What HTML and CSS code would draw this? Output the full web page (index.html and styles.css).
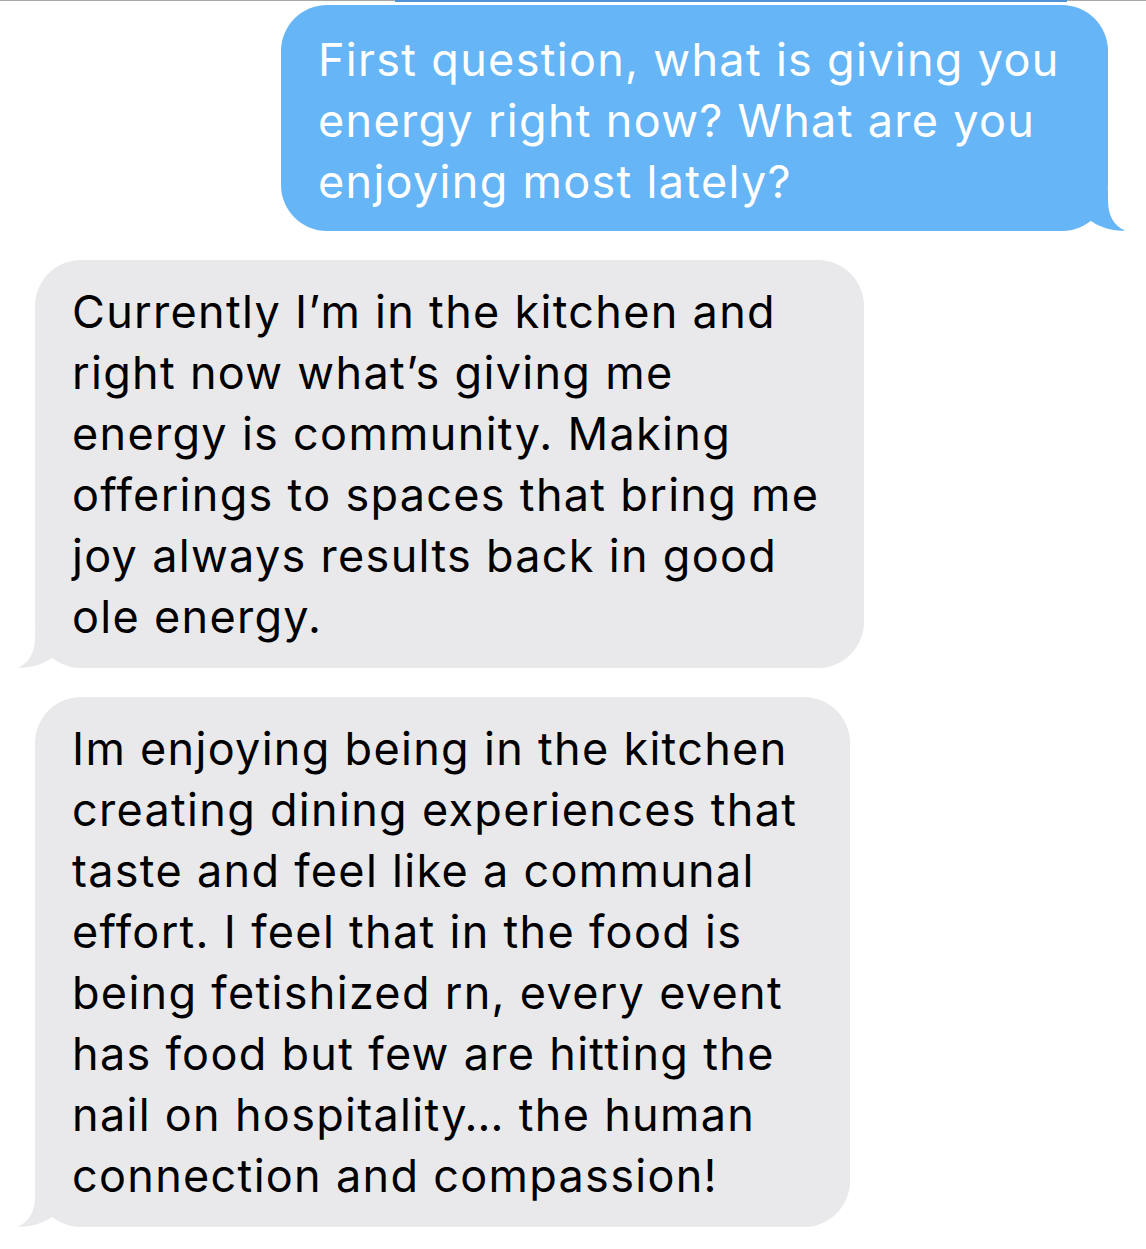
FILE: index.html
```html
<!DOCTYPE html>
<html>
<head>
<meta charset="utf-8">
<link rel="stylesheet" href="styles.css">
</head>
<body>
<div class="topbar"><div class="topstrip"></div></div>
<div class="thread">
  <div class="bubble sent">
    <p class="msg">First question, what is giving you<br>energy right now? What are you<br>enjoying most lately?</p>
    <svg class="tail tail-right" width="40" height="42" viewBox="0 0 40 42"><path d="M0 0 L23 0 L23 10 C23 26 29 36 40 40.5 C30 41.5 16 38 6 31 L0 31 Z" fill="currentColor"/></svg>
  </div>
  <div class="bubble recv recv-1">
    <p class="msg">Currently I’m in the kitchen and<br>right now what’s giving me<br>energy is community. Making<br>offerings to spaces that bring me<br>joy always results back in good<br>ole energy.</p>
    <svg class="tail tail-left" width="40" height="42" viewBox="0 0 40 42"><path d="M40 0 L17 0 L17 10 C17 26 11 36 0 40.5 C10 41.5 24 38 34 31 L40 31 Z" fill="currentColor"/></svg>
  </div>
  <div class="bubble recv recv-2">
    <p class="msg">Im enjoying being in the kitchen<br>creating dining experiences that<br>taste and feel like a communal<br>effort. I feel that in the food is<br>being fetishized rn, every event<br>has food but few are hitting the<br>nail on hospitality… the human<br>connection and compassion!</p>
    <svg class="tail tail-left" width="40" height="42" viewBox="0 0 40 42"><path d="M40 0 L17 0 L17 10 C17 26 11 36 0 40.5 C10 41.5 24 38 34 31 L40 31 Z" fill="currentColor"/></svg>
  </div>
</div>
</body>
</html>
```

FILE: styles.css
```css
html, body {
  margin: 0;
  padding: 0;
  background: #ffffff;
}

body {
  font-family: Inter, "Liberation Sans", Arial, sans-serif;
  width: 1146px;
  height: 1249px;
  overflow: hidden;
}

.topbar {
  height: 1px;
  background: #a8a8a8;
  position: relative;
}

.topstrip {
  position: absolute;
  left: 395px;
  top: 0;
  width: 672px;
  height: 2px;
  background: #4d93d8;
}

.thread {
  display: flex;
  flex-direction: column;
  padding-top: 4px;
  gap: 29px;
}

.bubble {
  position: relative;
  border-radius: 46px;
  box-sizing: border-box;
  padding: 21px 20px 21px 37px;
}

.msg {
  margin: 0;
  font-size: 45px;
  line-height: 61px;
  letter-spacing: 1.3px;
  white-space: nowrap;
}

.sent {
  align-self: flex-end;
  margin-right: 38px;
  width: 827px;
  height: 226px;
  padding-top: 24px;
  background: #66b5f6;
  color: #ffffff;
}

.recv {
  align-self: flex-start;
  margin-left: 35px;
  background: #e9e9eb;
  color: #000000;
}

.recv-1 {
  width: 829px;
  height: 408px;
}

.recv-2 {
  width: 815px;
  height: 530px;
}

.tail {
  position: absolute;
  bottom: -1px;
  display: block;
}

.sent .tail {
  color: #66b5f6;
}

.recv .tail {
  color: #e9e9eb;
}

.tail-right {
  right: -17px;
}

.tail-left {
  left: -17px;
}
```
